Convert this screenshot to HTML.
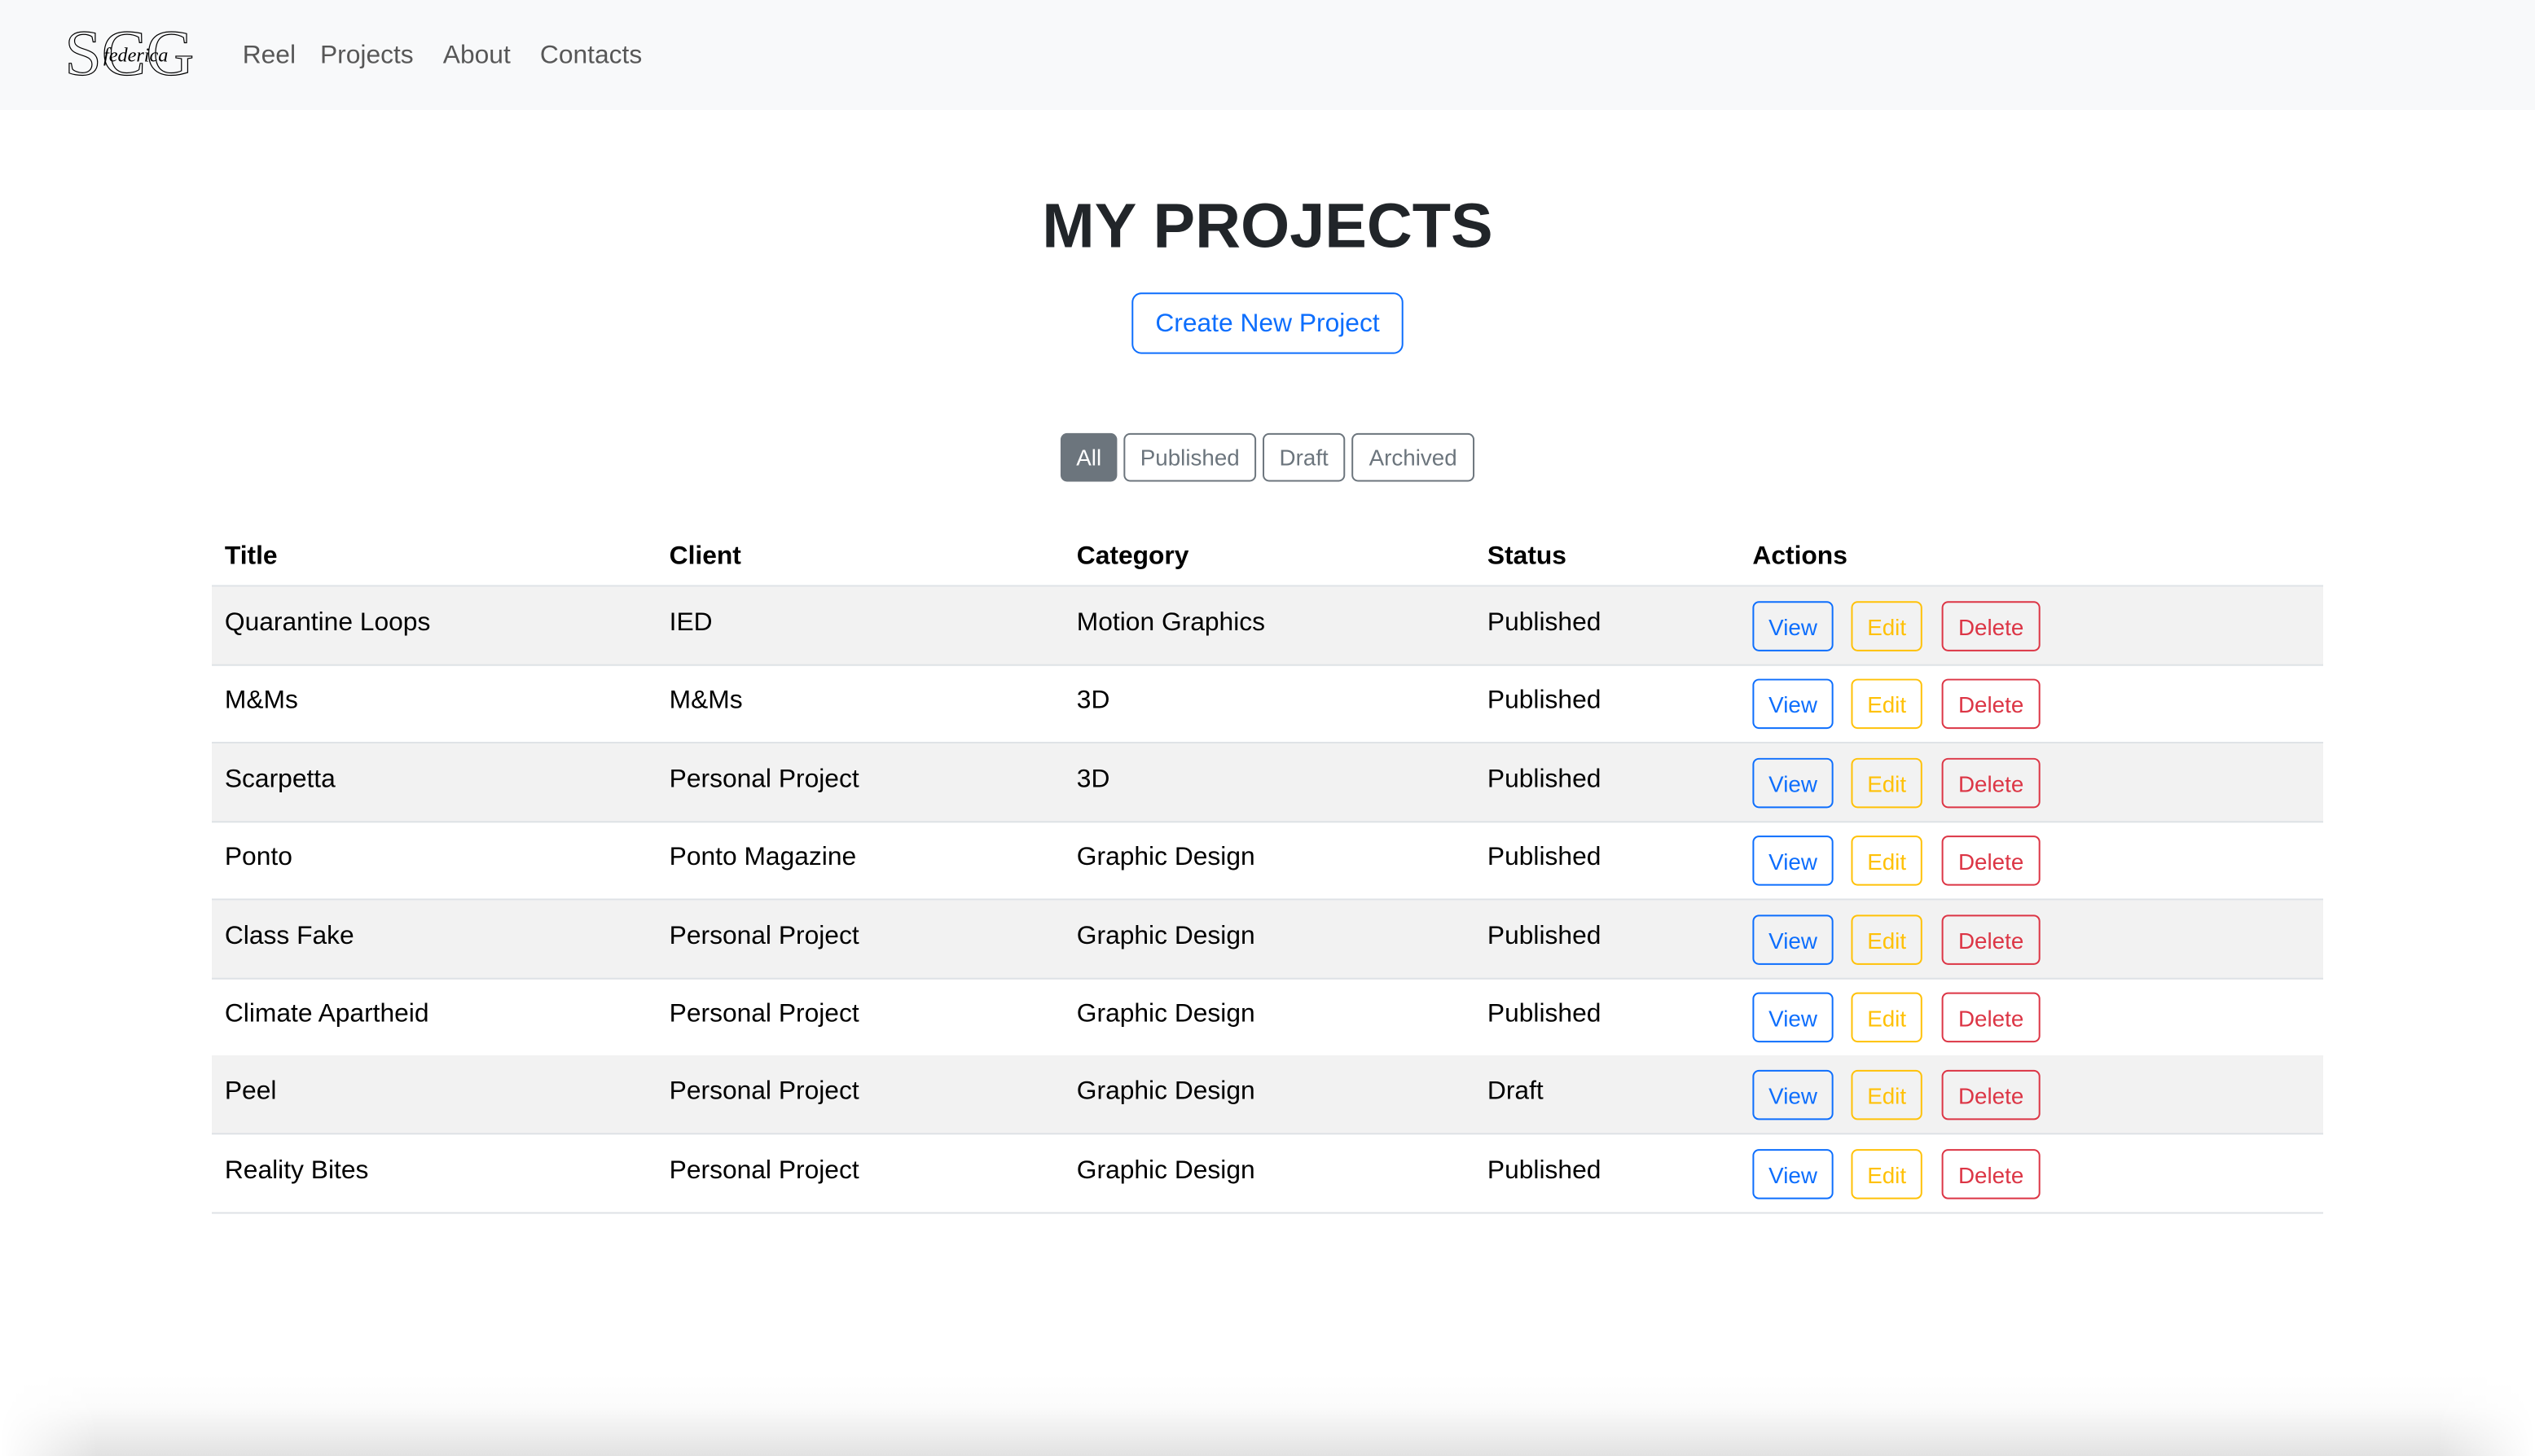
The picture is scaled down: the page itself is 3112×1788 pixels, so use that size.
<!DOCTYPE html>
<html><head><meta charset="utf-8"><style>
html,body{margin:0;padding:0;width:3112px;height:1788px;overflow:hidden;background:#fff}
#w{position:absolute;left:0;top:0;width:1568px;height:901px;transform:scale(1.98469);transform-origin:0 0;font-family:"Liberation Sans",Arial,sans-serif;color:#212529}
.a{position:absolute;white-space:nowrap}
.nav{position:absolute;left:0;top:0;width:1568px;height:68px;background:#f8f9fa}
.nl{position:absolute;top:26px;font-size:16px;color:rgba(0,0,0,.65)}
.btn{position:absolute;box-sizing:border-box;border:1px solid;border-radius:4px;text-align:center;font-size:14px}
.row{position:absolute;left:131px;width:1306px;height:48px;border-bottom:1px solid #dee2e6}
.row.s{background:#f2f2f2}
.c{position:absolute;top:14px;font-size:16px;color:#000}
</style></head><body><div id="w">
<div class="nav">
<svg class="a" style="left:40px;top:15px" width="82" height="36" viewBox="0 0 82 36">
<text x="0" y="31" font-family="Liberation Serif,serif" font-size="40" fill="none" stroke="#000" stroke-width="0.6" textLength="80" lengthAdjust="spacingAndGlyphs">SCG</text>
<text x="24" y="23" font-family="Liberation Serif,serif" font-style="italic" font-size="12" fill="#000" textLength="40" lengthAdjust="spacingAndGlyphs">federica</text>
</svg>
<div class="nl" style="left:150px">Reel</div>
<div class="nl" style="left:198px">Projects</div>
<div class="nl" style="left:274px">About</div>
<div class="nl" style="left:334px">Contacts</div>
</div>
<div class="a" style="left:0;width:1568px;top:119px;text-align:center;font-size:39px;font-weight:bold;color:#212529">MY PROJECTS</div>
<div class="btn" style="left:700px;top:181px;width:168px;height:38px;line-height:38px;font-size:16px;color:#0d6efd;border-color:#0d6efd;border-radius:6px">Create New Project</div>
<div class="btn" style="left:656px;top:268px;width:35px;height:30px;line-height:29px;background:#6c757d;border-color:#6c757d;color:#fff">All</div>
<div class="btn" style="left:695px;top:268px;width:82px;height:30px;line-height:29px;border-color:#6c757d;color:#6c757d">Published</div>
<div class="btn" style="left:781px;top:268px;width:51px;height:30px;line-height:29px;border-color:#6c757d;color:#6c757d">Draft</div>
<div class="btn" style="left:836px;top:268px;width:76px;height:30px;line-height:29px;border-color:#6c757d;color:#6c757d">Archived</div>
<div class="row" style="top:322px;height:40px;border-bottom:1px solid #dee2e6">
<div class="c" style="left:8px;font-weight:bold">Title</div><div class="c" style="left:283px;font-weight:bold">Client</div><div class="c" style="left:535px;font-weight:bold">Category</div><div class="c" style="left:789px;font-weight:bold">Status</div><div class="c" style="left:953px;font-weight:bold">Actions</div>
</div>
<div id="rows"></div>
<div class="a" style="left:0;top:850px;width:1568px;height:51px;background:linear-gradient(#fff 0%,#fbfbfb 40%,#e2e2e2 100%);-webkit-mask:linear-gradient(90deg,transparent 0,#000 60px,#000 1508px,transparent 1568px)"></div>
</div>
<script>
var d=[["Quarantine Loops","IED","Motion Graphics","Published"],["M&amp;Ms","M&amp;Ms","3D","Published"],["Scarpetta","Personal Project","3D","Published"],["Ponto","Ponto Magazine","Graphic Design","Published"],["Class Fake","Personal Project","Graphic Design","Published"],["Climate Apartheid","Personal Project","Graphic Design","Published"],["Peel","Personal Project","Graphic Design","Draft"],["Reality Bites","Personal Project","Graphic Design","Published"]];
var h="";d.forEach(function(r,i){var t=363+i*48.4;h+='<div class="row'+(i%2==0?' s':'')+'" style="top:'+t+'px"><div class="c" style="left:8px">'+r[0]+'</div><div class="c" style="left:283px">'+r[1]+'</div><div class="c" style="left:535px">'+r[2]+'</div><div class="c" style="left:789px">'+r[3]+'</div>'+
'<div class="btn" style="left:953px;top:9px;width:50px;height:31px;line-height:30px;color:#0d6efd;border-color:#0d6efd">View</div>'+
'<div class="btn" style="left:1014px;top:9px;width:44px;height:31px;line-height:30px;color:#ffc107;border-color:#ffc107">Edit</div>'+
'<div class="btn" style="left:1070px;top:9px;width:61px;height:31px;line-height:30px;color:#dc3545;border-color:#dc3545">Delete</div></div>';});
document.getElementById("rows").innerHTML=h;
</script>
</body></html>
